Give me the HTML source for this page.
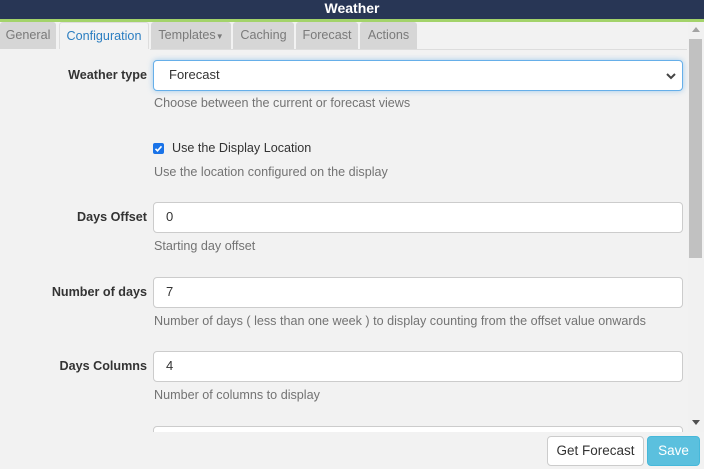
<!DOCTYPE html>
<html><head><style>
*{box-sizing:border-box;margin:0;padding:0}
body{width:704px;height:469px;overflow:hidden;background:#f2f2f2;font-family:"Liberation Sans",sans-serif;font-size:12.6px;color:#333;position:relative}
.a{position:absolute}
.title{left:0;top:0;width:704px;height:19px;background:#283655;color:#fff;font-weight:bold;font-size:14px;text-align:center;line-height:17px;padding-left:0}
.green{left:0;top:19px;width:704px;height:3px;background:#a3d36a}
.tab{top:22px;height:27px;background:#d6d6d6;color:#7a7a7a;line-height:26px;text-align:center;border-radius:3px 3px 0 0}
.tab.act{background:#f2f2f2;color:#2b7ec1;border:1px solid #ddd;border-bottom:none}
.line{left:150px;top:49px;width:537px;height:1px;background:#ddd}
.lab{font-weight:bold;text-align:right;width:147px;left:0}
.inp{left:153px;width:530px;height:31px;background:#fff;border:1px solid #ccc;border-radius:4px;padding-left:12px;line-height:28px;font-size:13px}
.help{left:154px;color:#737373}
.sb{left:688px;top:22px;width:16px;height:410px;background:#f1f1f1}
.thumb{left:689px;top:39px;width:13px;height:219px;background:#c1c1c1}
.btn{height:30px;border-radius:4px;line-height:28px;text-align:center;font-size:13.5px}
</style></head><body>
<div class="a title">Weather</div>
<div class="a green"></div>
<div class="a tab" style="left:0;width:56px">General</div>
<div class="a tab act" style="left:59px;width:90px">Configuration</div>
<div class="a tab" style="left:151px;width:80px">Templates<span style="font-size:8px">▼</span></div>
<div class="a tab" style="left:233px;width:61px">Caching</div>
<div class="a tab" style="left:296px;width:62px">Forecast</div>
<div class="a tab" style="left:360px;width:57px">Actions</div>
<div class="a line"></div>

<div class="a lab" style="top:68px">Weather type</div>
<div class="a inp" style="top:60px;border-color:#66afe9;box-shadow:0 0 6px rgba(102,175,233,.6);padding-left:15px">Forecast
<svg class="a" style="right:5px;top:10px" width="12" height="10" viewBox="0 0 12 10"><path d="M2 3l4 4 4-4" stroke="#444" stroke-width="2" fill="none"/></svg></div>
<div class="a help" style="top:96px">Choose between the current or forecast views</div>

<div class="a" style="left:153px;top:143px;width:11px;height:11px;background:#1a73e8;border-radius:2px"><svg width="11" height="11" viewBox="0 0 11 11" style="display:block"><path d="M2.5 5.8l2 2 4-4.5" stroke="#fff" stroke-width="1.6" fill="none"/></svg></div>
<div class="a" style="left:172px;top:141px">Use the Display Location</div>
<div class="a help" style="top:165px">Use the location configured on the display</div>

<div class="a lab" style="top:210px">Days Offset</div>
<div class="a inp" style="top:202px">0</div>
<div class="a help" style="top:239px">Starting day offset</div>

<div class="a lab" style="top:285px">Number of days</div>
<div class="a inp" style="top:277px">7</div>
<div class="a help" style="top:314px">Number of days ( less than one week ) to display counting from the offset value onwards</div>

<div class="a lab" style="top:359px">Days Columns</div>
<div class="a inp" style="top:351px">4</div>
<div class="a help" style="top:388px">Number of columns to display</div>

<div class="a inp" style="top:426px;height:20px"></div>
<div class="a" style="left:0;top:432px;width:704px;height:37px;background:#f2f2f2"></div>

<div class="a sb"></div>
<div class="a thumb"></div>
<div class="a" style="left:692px;top:27px;width:0;height:0;border:4px solid transparent;border-bottom:5px solid #a3a3a3;border-top:none"></div>
<div class="a" style="left:692px;top:420px;width:0;height:0;border:4px solid transparent;border-top:5px solid #505050;border-bottom:none"></div>

<div class="a btn" style="left:547px;top:436px;width:97px;background:#fff;border:1px solid #ccc;color:#333">Get Forecast</div>
<div class="a btn" style="left:647px;top:436px;width:53px;background:#5bc0de;color:#fff;border:1px solid #46b8da">Save</div>
</body></html>
